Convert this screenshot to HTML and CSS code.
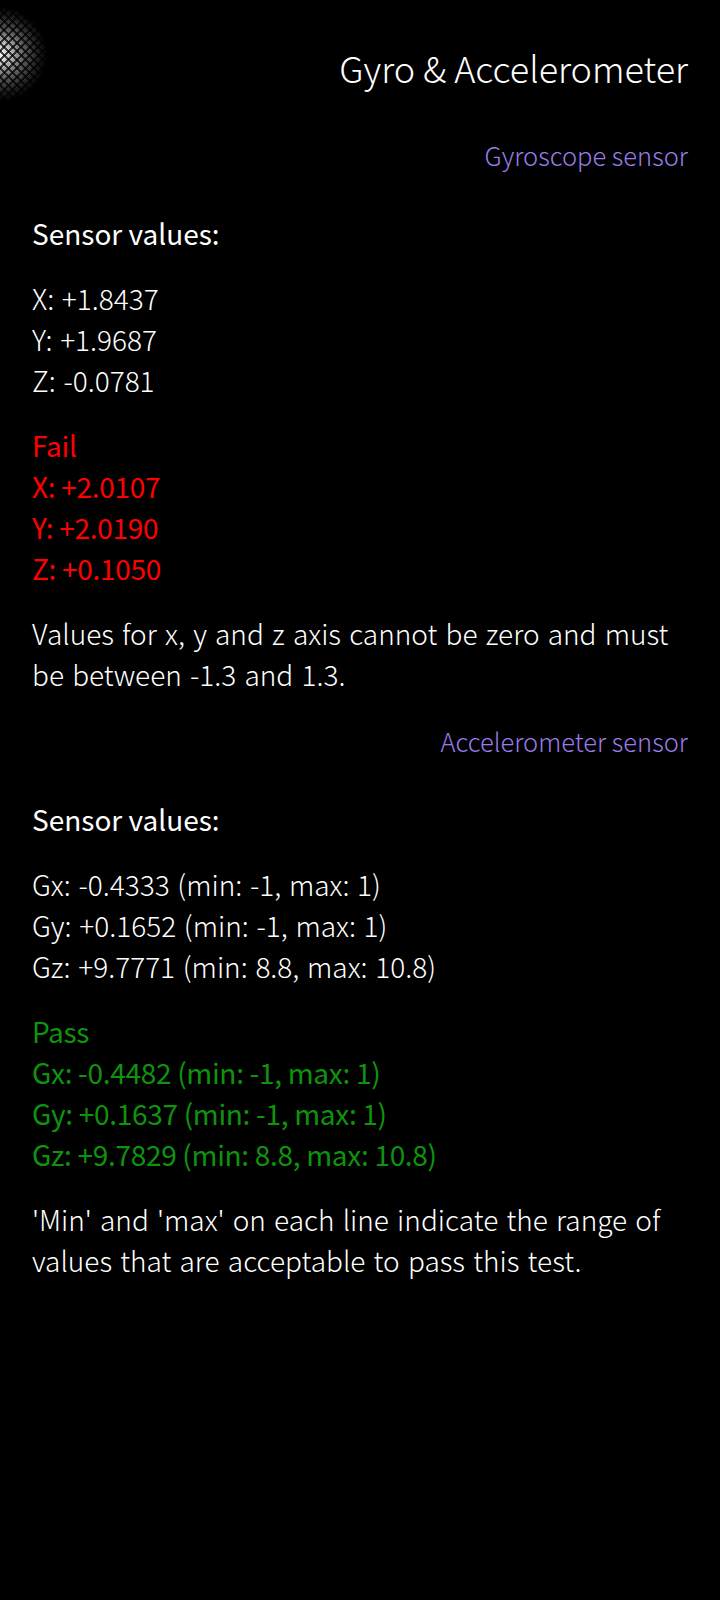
FILE: index.html
```html
<!DOCTYPE html>
<html lang="en">
<head>
<meta charset="utf-8">
<title>Gyro &amp; Accelerometer</title>
<link rel="stylesheet" href="styles.css">
</head>
<body>
<div class="glow"></div>
<main class="page">
  <h1 class="title">Gyro &amp; Accelerometer</h1>

  <section class="sensor">
    <h2 class="sensor-label">Gyroscope sensor</h2>
    <h3 class="values-heading">Sensor values:</h3>
    <div class="lines">
      <div>X: +1.8437</div>
      <div>Y: +1.9687</div>
      <div>Z: -0.0781</div>
    </div>
    <div class="lines result fail">
      <div>Fail</div>
      <div>X: +2.0107</div>
      <div>Y: +2.0190</div>
      <div>Z: +0.1050</div>
    </div>
    <p class="note">Values for x, y and z axis cannot be zero and must be between -1.3 and 1.3.</p>
  </section>

  <section class="sensor">
    <h2 class="sensor-label">Accelerometer sensor</h2>
    <h3 class="values-heading">Sensor values:</h3>
    <div class="lines">
      <div>Gx: -0.4333 (min: -1, max: 1)</div>
      <div>Gy: +0.1652 (min: -1, max: 1)</div>
      <div>Gz: +9.7771 (min: 8.8, max: 10.8)</div>
    </div>
    <div class="lines result pass">
      <div>Pass</div>
      <div>Gx: -0.4482 (min: -1, max: 1)</div>
      <div>Gy: +0.1637 (min: -1, max: 1)</div>
      <div>Gz: +9.7829 (min: 8.8, max: 10.8)</div>
    </div>
    <p class="note">'Min' and 'max' on each line indicate the range of values that are acceptable to pass this test.</p>
  </section>
</main>
</body>
</html>
```

FILE: styles.css
```css
html, body {
  margin: 0;
  padding: 0;
  background: #000;
}

body {
  width: 720px;
  min-height: 1600px;
  color: #fff;
  font-family: "Noto Sans CJK KR", "Noto Sans CJK SC", "Noto Sans", sans-serif;
  font-weight: 300;
  position: relative;
  overflow: hidden;
}

.glow {
  position: absolute;
  left: -46px;
  top: 8px;
  width: 92px;
  height: 92px;
  border-radius: 50%;
  background: radial-gradient(circle at center, rgba(255,255,255,1) 0%, rgba(255,255,255,0.75) 16%, rgba(255,255,255,0.35) 38%, rgba(255,255,255,0.1) 60%, rgba(255,255,255,0) 74%);
}

.glow::after {
  content: "";
  position: absolute;
  inset: 0;
  background:
    repeating-linear-gradient(45deg, rgba(0,0,0,0.7) 0 2px, transparent 2px 6px),
    repeating-linear-gradient(-45deg, rgba(0,0,0,0.7) 0 2px, transparent 2px 6px);
}

.page {
  padding: 41px 32px 0 32px;
  display: flex;
  flex-direction: column;
}

.title {
  margin: 0;
  text-align: right;
  font-size: 36px;
  line-height: 52px;
  font-weight: 300;
}

.sensor {
  display: flex;
  flex-direction: column;
}

.sensor-label {
  margin: 41px 0 0 0;
  text-align: right;
  font-size: 25.5px;
  line-height: 41px;
  font-weight: 300;
  color: #9a7ce8;
}

.sensor + .sensor .sensor-label {
  margin-top: 25px;
}

.values-heading {
  margin: 38px 0 0 0;
  font-size: 28px;
  line-height: 41px;
  font-weight: 400;
}

.lines {
  margin-top: 24px;
  font-size: 28px;
  line-height: 41px;
  word-spacing: 1.5px;
}

.result {
  font-weight: 400;
  word-spacing: 0;
  letter-spacing: -0.3px;
}

.fail {
  color: #ff0000;
}

.pass {
  color: #0f930f;
}

.note {
  margin: 24px 0 0 0;
  font-size: 28px;
  line-height: 41px;
  word-spacing: 2px;
}
```
